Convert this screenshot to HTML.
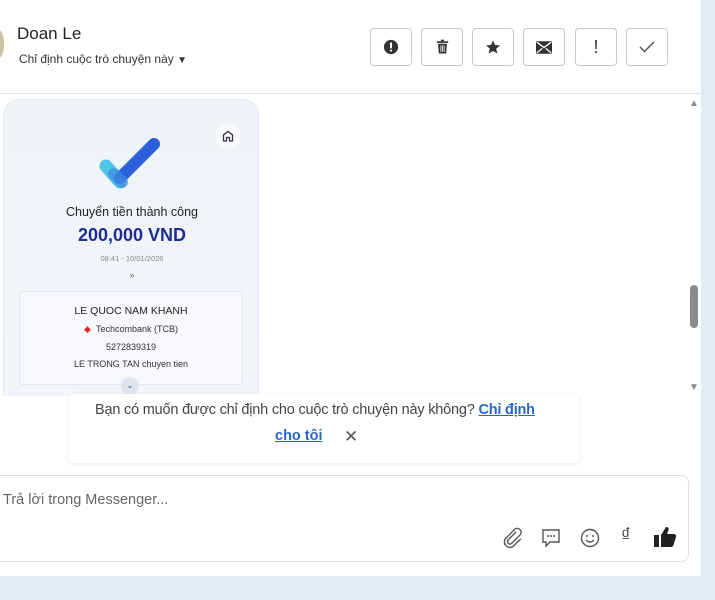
<!DOCTYPE html>
<html><head><meta charset="utf-8"><style>
*{margin:0;padding:0;box-sizing:border-box}
body{width:715px;height:600px;overflow:hidden;background:#e3edf1;font-family:"Liberation Sans",sans-serif;position:relative}
.panel{position:absolute;left:0;top:0;width:701px;height:576px;background:#fff}
.abs{position:absolute}
.btn{position:absolute;top:28px;width:42px;height:38px;border:1px solid #c8c8c8;border-radius:4px;background:#fff;display:flex;align-items:center;justify-content:center}
.card{position:absolute;left:3px;top:99px;width:256px;height:310px;border-radius:16px;background:linear-gradient(180deg,#eef3f8,#f2f6fa);border:1px solid #e4e9ef;overflow:hidden}
.c{text-align:center;position:absolute;left:0;width:256px}
</style></head><body>
<div class="panel">
<div class="abs" style="left:-6px;top:30px;width:10px;height:28px;border-radius:50%;background:#c9c3a0"></div>
<div class="abs" style="left:17px;top:24px;font-size:17px;color:#222">Doan Le</div>
<div class="abs" style="left:19px;top:52px;font-size:12px;color:#333">Chỉ định cuộc trò chuyện này <span style="font-size:10px">▼</span></div>
<div class="btn" style="left:370px"><svg width="16" height="16" viewBox="0 0 18 18"><circle cx="9" cy="9" r="8" fill="#333"/><rect x="7.9" y="4" width="2.2" height="6.5" fill="#fff"/><rect x="7.9" y="12" width="2.2" height="2" fill="#fff"/></svg></div>
<div class="btn" style="left:421px"><svg width="13" height="16" viewBox="0 0 16 18"><rect x="1" y="2" width="14" height="2" fill="#333"/><rect x="6" y="0" width="4" height="2" fill="#333"/><path d="M2.5 5h11l-1 12h-9z" fill="#333"/><path d="M6 7v8M8 7v8M10 7v8" stroke="#fff" stroke-width="1"/></svg></div>
<div class="btn" style="left:472px"><svg width="16" height="16" viewBox="0 0 24 24"><path d="M12 2l3 7 7.5.6-5.7 4.9 1.8 7.4L12 18l-6.6 3.9 1.8-7.4L1.5 9.6 9 9z" fill="#333"/></svg></div>
<div class="btn" style="left:523px"><svg width="16" height="13" viewBox="0 0 18 14"><rect width="18" height="14" rx="1" fill="#333"/><path d="M1 1l8 6 8-6M1 13l6-5M17 13l-6-5" stroke="#fff" stroke-width="1.5" fill="none"/></svg></div>
<div class="btn" style="left:575px;font-size:18px;color:#333">!</div>
<div class="btn" style="left:626px"><svg width="16" height="12" viewBox="0 0 16 12"><path d="M1 6l4.5 4.5L15 1" stroke="#555" stroke-width="1.5" fill="none"/></svg></div>
<div class="abs" style="left:0;top:93px;width:701px;height:1px;background:#e3e3e3"></div>
<div class="abs" style="left:689px;top:98px;font-size:10px;color:#888">▲</div>
<div class="abs" style="left:690px;top:285px;width:8px;height:43px;border-radius:4px;background:#8a8a8a"></div>
<div class="abs" style="left:689px;top:382px;font-size:10px;color:#888">▼</div>
<div class="card">
<div class="abs" style="left:211px;top:23px;width:26px;height:26px;border-radius:50%;background:#f7f9fc;display:flex;align-items:center;justify-content:center"><svg width="12" height="12" viewBox="0 0 12 12"><path d="M1.5 11V5L6 1.5 10.5 5v6H7.5V7.5h-3V11z" stroke="#334" stroke-width="1.3" fill="none"/></svg></div>
<svg class="abs" style="left:92px;top:34px" width="70" height="58" viewBox="0 0 70 58"><path d="M10 32l14 16" stroke="#4fc4e6" stroke-width="13" stroke-linecap="round"/><path d="M24 44L58 10" stroke="#2c5fdb" stroke-width="12" stroke-linecap="round"/><path d="M18 40l8 8" stroke="#3f8fe0" stroke-width="12" stroke-linecap="round" opacity=".7"/></svg>
<div class="c" style="top:105px;font-size:12.5px;color:#222">Chuyển tiền thành công</div>
<div class="c" style="top:125px;font-size:18px;font-weight:bold;color:#1c2f8f">200,000 VND</div>
<div class="c" style="top:154px;font-size:7.5px;color:#888">08:41 - 10/01/2026</div>
<div class="c" style="top:170px;font-size:9px;color:#667">»</div>
<div class="abs" style="left:15px;top:191px;width:224px;height:94px;background:#f6f8fb;border:1px solid #e1e6ee;border-radius:4px">
<div class="abs" style="left:0;width:222px;text-align:center;top:13px;font-size:10.5px;color:#222">LE QUOC NAM KHANH</div>
<div class="abs" style="left:0;width:222px;text-align:center;top:32px;font-size:9px;color:#333"><span style="color:#e0262c;font-size:9px">◆</span>&nbsp;&nbsp;Techcombank (TCB)</div>
<div class="abs" style="left:0;width:222px;text-align:center;top:50px;font-size:9px;color:#333">5272839319</div>
<div class="abs" style="left:0;width:222px;text-align:center;top:67px;font-size:9px;color:#333">LE TRONG TAN chuyen tien</div>
</div>
<div class="abs" style="left:117px;top:277px;width:18px;height:18px;border-radius:50%;background:#dfe5f0;font-size:8px;text-align:center;line-height:18px;color:#445">⌄</div>
</div>
<div class="abs" style="left:0;top:396px;width:690px;height:14px;background:#fff"></div>
<div class="abs" style="left:69px;top:394px;width:510px;height:69px;background:#fff;box-shadow:0 1px 4px rgba(0,0,0,.1);border-radius:3px">
<div class="abs" style="left:26px;top:8px;font-size:14.5px;color:#444;letter-spacing:-0.2px">Bạn có muốn được chỉ định cho cuộc trò chuyện này không? <b style="color:#2a66c3;text-decoration:underline">Chỉ định</b></div>
<div class="abs" style="left:206px;top:34px;font-size:14.5px;color:#2a66c3;font-weight:bold;text-decoration:underline">cho tôi</div>
<div class="abs" style="left:275px;top:33px;font-size:17px;color:#555">✕</div>
</div>
<div class="abs" style="left:-8px;top:475px;width:697px;height:87px;border:1px solid #e0e0e0;border-radius:8px;background:#fff">
<div class="abs" style="left:10px;top:16px;font-size:14.5px;color:#666">Trả lời trong Messenger...</div>
<svg class="abs" style="left:509px;top:51px" width="22" height="22" viewBox="0 0 22 22"><path d="M14 5l-8 8a2.5 2.5 0 003.5 3.5l9-9a4 4 0 00-5.5-5.5l-9 9a5.5 5.5 0 007.8 7.8l7-7" stroke="#555" stroke-width="1.4" fill="none"/></svg>
<svg class="abs" style="left:547px;top:51px" width="22" height="22" viewBox="0 0 22 22"><path d="M3 3h16v12H10l-4 4v-4H3z" stroke="#555" stroke-width="1.4" fill="none"/><circle cx="8" cy="9" r="1" fill="#555"/><circle cx="11" cy="9" r="1" fill="#555"/><circle cx="14" cy="9" r="1" fill="#555"/></svg>
<svg class="abs" style="left:586px;top:51px" width="22" height="22" viewBox="0 0 22 22"><circle cx="11" cy="11" r="8.5" stroke="#555" stroke-width="1.4" fill="none"/><circle cx="8" cy="9" r="1" fill="#555"/><circle cx="14" cy="9" r="1" fill="#555"/><path d="M7 13q4 4 8 0" stroke="#555" stroke-width="1.3" fill="none"/></svg>
<div class="abs" style="left:628px;top:49px;font-size:19px;color:#444">₫</div>
<svg class="abs" style="left:660px;top:50px" width="24" height="22" viewBox="0 0 24 22"><rect x="1" y="9" width="5" height="12" fill="#222"/><path d="M8 9l5-8c2 0 3 1 2.5 3L14 8h7c1.5 0 2.5 1.5 2 3l-2.5 8c-.4 1.3-1.3 2-2.5 2H8z" fill="#222"/></svg>
</div>
</div>
</body></html>
